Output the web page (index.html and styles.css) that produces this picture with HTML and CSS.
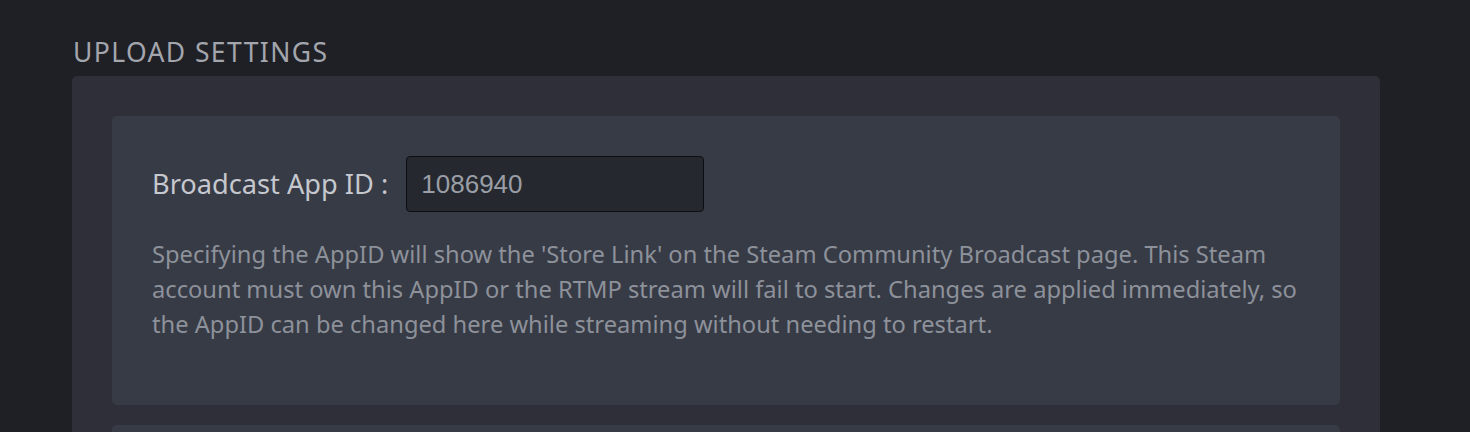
FILE: index.html
```html
<!DOCTYPE html>
<html>
<head>
<meta charset="utf-8">
<link rel="stylesheet" href="styles.css">
</head>
<body>
<div class="page">
  <h2 class="section-title">UPLOAD SETTINGS</h2>
  <div class="panel">
    <div class="card">
      <div class="field-row">
        <label class="field-label" for="appid">Broadcast App ID :</label>
        <input class="field-input" id="appid" type="text" value="1086940">
      </div>
      <p class="field-desc">Specifying the AppID will show the 'Store Link' on the Steam Community Broadcast page. This Steam account must own this AppID or the RTMP stream will fail to start. Changes are applied immediately, so the AppID can be changed here while streaming without needing to restart.</p>
    </div>
    <div class="card card-next"></div>
  </div>
</div>
</body>
</html>
```
FILE: styles.css
```css
html, body {
  margin: 0;
  padding: 0;
  background: #1f2026;
  height: 100%;
  overflow: hidden;
}
.page {
  padding: 37px 90px 0 72px;
  font-family: "Noto Sans", "Open Sans", sans-serif;
}
.section-title {
  margin: 0 0 9px 1px;
  font-weight: 400;
  font-size: 26.5px;
  line-height: 30px;
  letter-spacing: 1.4px;
  color: #a3a6ad;
}
.panel {
  width: 1308px;
  background: #2e2f39;
  border-radius: 5px;
  padding: 40px 40px 0 40px;
  box-sizing: border-box;
  display: flex;
  flex-direction: column;
  gap: 20px;
}
.card {
  background: #373b46;
  border-radius: 5px;
  padding: 40px 40px 0 40px;
  height: 289px;
  box-sizing: border-box;
}
.field-row {
  display: flex;
  align-items: center;
  gap: 18px;
}
.field-label {
  font-size: 27.2px;
  line-height: 34px;
  color: #c5c8ce;
}
.field-input {
  width: 298px;
  height: 56px;
  box-sizing: border-box;
  background: #25282e;
  border: 1px solid #0d0e11;
  border-radius: 4px;
  padding: 0 14px;
  font-family: "Liberation Sans", Arial, sans-serif;
  font-size: 26px;
  color: #9a9ea6;
  outline: none;
}
.field-desc {
  margin: 25px 0 0 0;
  font-size: 23.7px;
  line-height: 35px;
  color: #8d919a;
}
.card-next {
  height: 40px;
}
```
